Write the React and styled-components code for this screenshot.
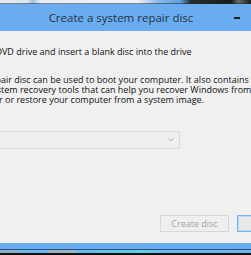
import React from "react";
import styled, { createGlobalStyle } from "styled-components";

const Global = createGlobalStyle`
  html, body { margin: 0; padding: 0; background: #000; }
  body { width: 251px; height: 255px; overflow: hidden; }
`;

const Screen = styled.div`
  width: 251px;
  height: 255px;
  overflow: hidden;
  display: flex;
  flex-direction: column;
  font-family: "Segoe UI", "Open Sans", sans-serif;
`;

const DesktopTop = styled.div`
  flex: none;
  height: 4px;
  background:
    linear-gradient(180deg, transparent 0 3px, rgba(40, 40, 40, 0.55) 3px 4px),
    linear-gradient(90deg, #e4ebf1 0, #dfe7ee 11%, #9cc0e2 13%, #e8eef4 16%, #eef2f6 55%, #8ab9e8 63%, #5d9fe0 72%, #2a2a2a 76%, #1a1a1a 92%, #6a6a6a 95%, #1a1a1a 100%);
`;

const DesktopBottom = styled.div`
  flex: none;
  height: 6px;
  background:
    linear-gradient(180deg, #2e5275 0 1px, transparent 1px 4px, #111 4px 6px),
    linear-gradient(90deg, #8fa9c0 0, #8fb2d2 7%, #6ab6f4 9%, #6ab6f4 18%, #9bb1c4 20%, #9fb3c6 29%, #6ab8f4 31%, #5ec6ea 45%, #5fd0e4 58%, #6ab8f4 64%, #6ab4f4 100%);
`;

const Window = styled.div`
  flex: none;
  box-sizing: border-box;
  height: 245px;
  width: 391px;
  margin-left: -66px;
  padding: 0 8px 6px;
  background: #6aacf0;
  display: flex;
  flex-direction: column;
`;

const TitleBar = styled.div`
  flex: none;
  height: 27px;
  display: flex;
  align-items: center;
`;

const Title = styled.div`
  flex: 1;
  padding-left: 76px;
  text-align: center;
  font-size: 11.5px;
  color: #26313d;
  white-space: nowrap;
`;

const Controls = styled.div`
  display: flex;
  align-self: stretch;
`;

const ControlButton = styled.div`
  width: ${(p) => p.$w}px;
  display: flex;
  align-items: center;
  justify-content: center;
`;

const MinGlyph = styled.span`
  display: block;
  width: 6px;
  height: 2px;
  margin-right: 1px;
  background: #1e1e1e;
`;

const Client = styled.div`
  flex: 1;
  background: #f0f0f0;
  display: flex;
  flex-direction: column;
  padding: 16px 11px 11px 8px;
  font-size: 9px;
  line-height: 10px;
  color: #111;
`;

const Heading = styled.div`
  margin: 0;
`;

const Description = styled.div`
  margin-top: 18px;
`;

const Line = styled.div`
  display: flex;
  white-space: pre;
`;

const Hidden = styled.span`
  flex: none;
  width: ${(p) => p.$w}px;
  display: flex;
  justify-content: flex-end;
`;

const DriveRow = styled.div`
  margin-top: 26px;
  display: flex;
  align-items: center;
  gap: 6px;
`;

const DriveLabel = styled.span`
  width: 30px;
  color: #9a9a9a;
`;

const Select = styled.div`
  box-sizing: border-box;
  width: 194px;
  height: 18px;
  border: 1px solid #dadada;
  background: #efefef;
  display: flex;
  align-items: center;
  justify-content: flex-end;
  padding-right: 5px;
`;

const Spacer = styled.div`
  flex: 1;
`;

const ButtonRow = styled.div`
  display: flex;
  justify-content: flex-end;
  gap: 8px;
`;

const Button = styled.div`
  box-sizing: border-box;
  width: 69px;
  height: 17px;
  display: flex;
  align-items: center;
  justify-content: center;
  font-size: 9px;
  border: 1px solid ${(p) => (p.$default ? "#7ab3ef" : "#d7d7d7")};
  box-shadow: ${(p) => (p.$default ? "inset 0 0 0 1px #b9d7f6" : "none")};
  background: ${(p) => (p.$default ? "#e9e9e9" : "#efefef")};
  color: ${(p) => (p.$default ? "#111" : "#a3a3a3")};
`;

function TextLine({ cut, lead, children }) {
  return (
    <Line>
      <Hidden $w={cut}>{lead}</Hidden>
      <span>{children}</span>
    </Line>
  );
}

export default function App() {
  return (
    <>
      <Global />
      <Screen>
        <DesktopTop />
        <Window>
          <TitleBar>
            <Title>Create a system repair disc</Title>
            <Controls>
              <ControlButton $w={26}>
                <MinGlyph />
              </ControlButton>
              <ControlButton $w={26} />
              <ControlButton $w={41} />
            </Controls>
          </TitleBar>
          <Client>
            <Heading>
              <TextLine cut={52} lead="Select a CD/D">
                VD drive and insert a blank disc into the drive
              </TextLine>
            </Heading>
            <Description>
              <TextLine cut={51} lead="A system rep">
                air disc can be used to boot your computer. It also contains Windows
              </TextLine>
              <TextLine cut={51} lead="Windows sys">
                tem recovery tools that can help you recover Windows from a
              </TextLine>
              <TextLine cut={55} lead="serious error ">
                or restore your computer from a system image.
              </TextLine>
            </Description>
            <DriveRow>
              <DriveLabel>Drive:</DriveLabel>
              <Select>
                <svg width="6" height="4" viewBox="0 0 6 4">
                  <path d="M0.5 0.5 L3 3 L5.5 0.5" fill="none" stroke="#aaaaaa" strokeWidth="1" />
                </svg>
              </Select>
            </DriveRow>
            <Spacer />
            <ButtonRow>
              <Button>Create disc</Button>
              <Button $default>Cancel</Button>
            </ButtonRow>
          </Client>
        </Window>
        <DesktopBottom />
      </Screen>
    </>
  );
}
